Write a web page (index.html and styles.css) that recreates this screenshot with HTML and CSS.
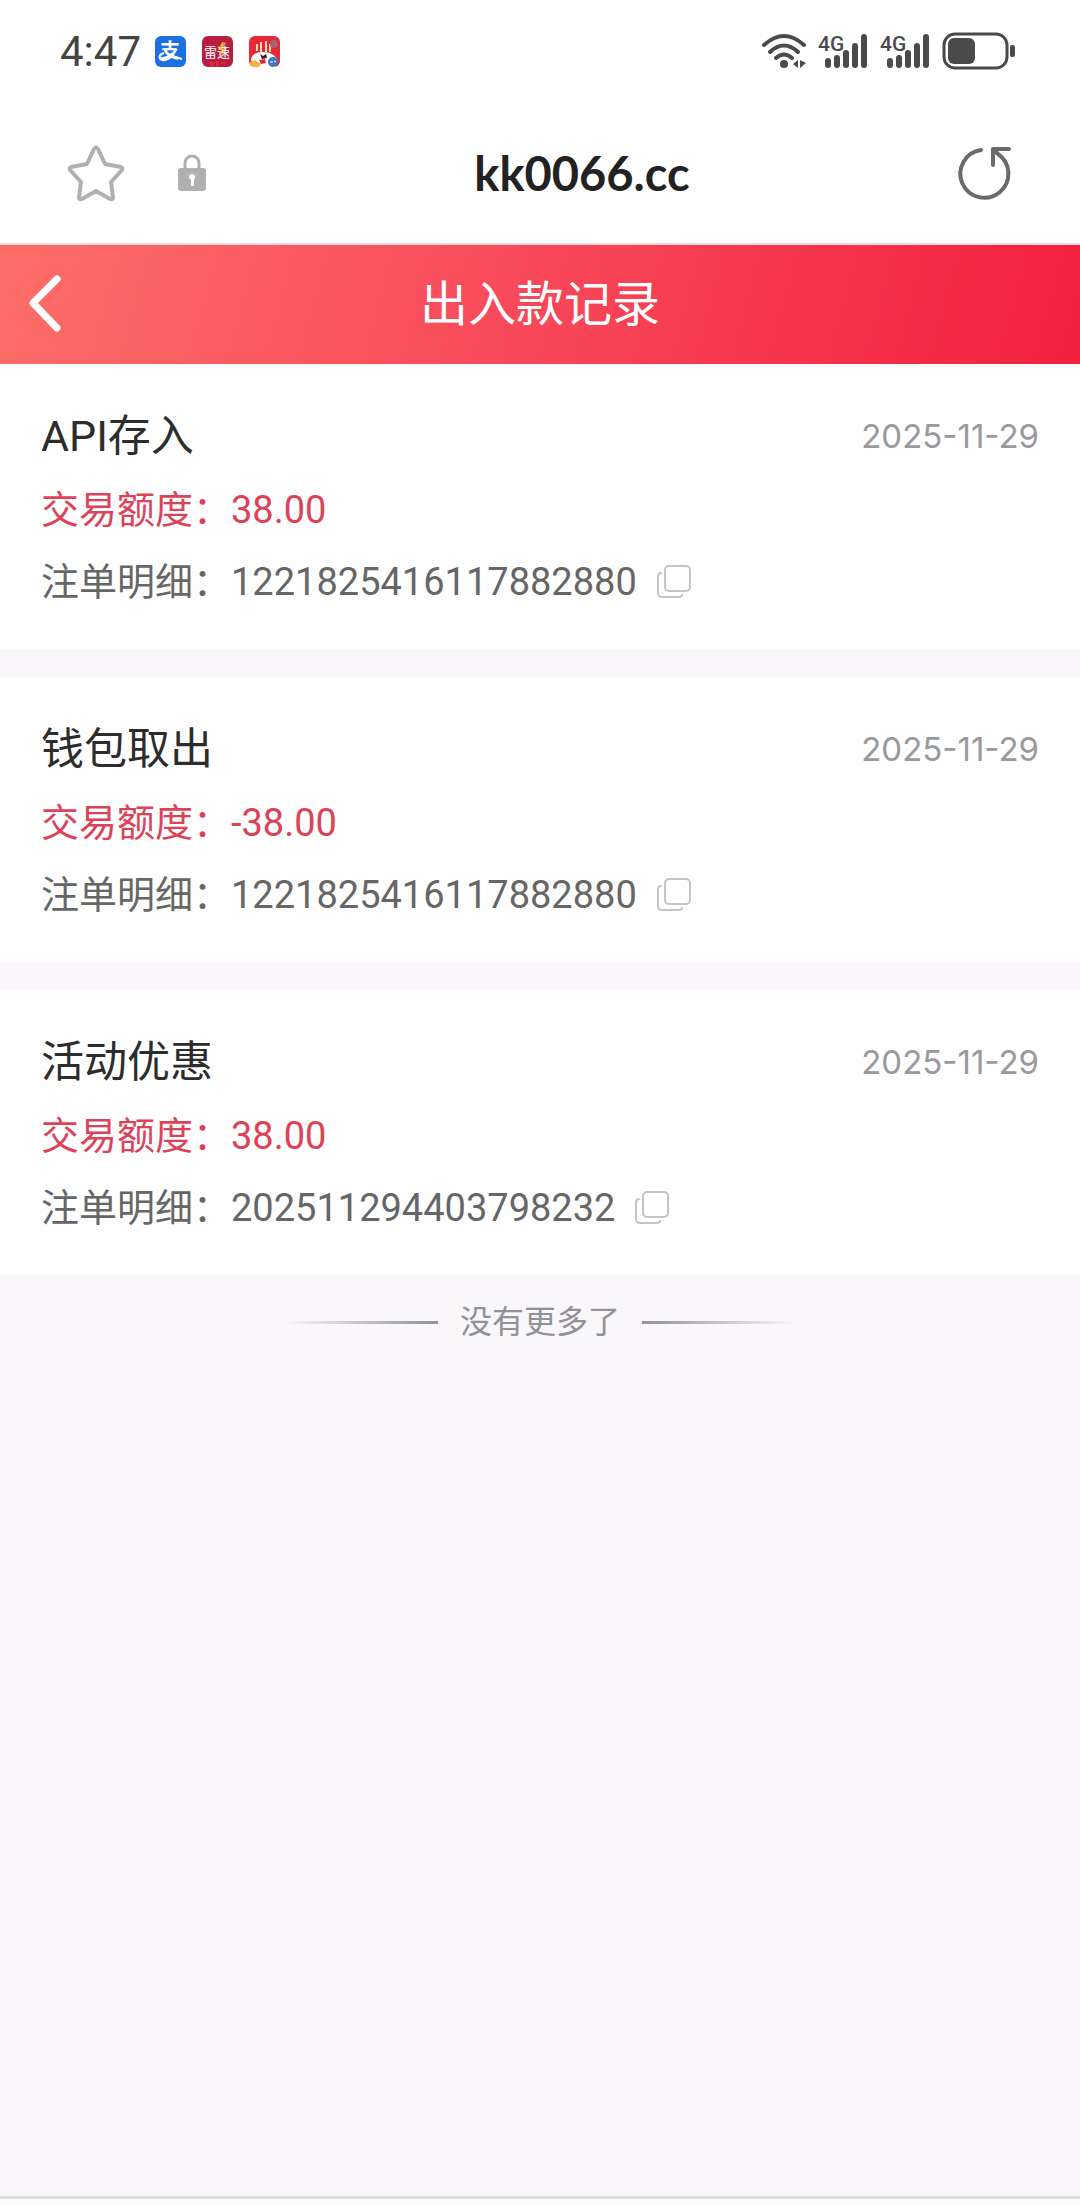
FILE: index.html
```html
<!DOCTYPE html>
<html lang="zh-CN">
<head>
<meta charset="utf-8">
<meta name="viewport" content="width=device-width, initial-scale=1">
<title>出入款记录</title>
<link rel="stylesheet" href="styles.css">
</head>
<body>

<!-- status bar -->
<div class="status">
	<span class="time">4:47</span>
	<div class="apps">
		<svg width="31" height="31" viewBox="0 0 31 31">
			<rect width="31" height="31" rx="6" fill="#1b70e4"/>
			<text x="15" y="22" class="app-zhi">支</text>
			<path d="M9 17c-7 2-5 8 1 7 5-1 8-4 9-7M15 18q6 4 12 5" fill="none" stroke="#fff" stroke-width="2"/>
		</svg>
		<svg width="31" height="31" viewBox="0 0 31 31">
			<rect width="31" height="31" rx="6" fill="#b81f3e"/>
			<path d="M20 6l-4 8h4l-3 8 8-10h-4l3-5z" fill="#f5a12c"/>
			<text x="15" y="21" class="app-lei">雷速</text>
			<path d="M8 26h4v5H8zM14 25h3v6h-3zM19 26h5v2h-5z" fill="#e0233f"/>
		</svg>
		<svg width="31" height="31" viewBox="0 0 31 31">
			<rect width="31" height="31" rx="6" fill="#e8283a"/>
			<path d="M8 8v7M12 6v10M17 5v11M21 8v8" stroke="#ffd9b0" stroke-width="2"/>
			<circle cx="25" cy="8" r="4" fill="#a8636c"/>
			<path d="M2 24c0-5 5-8 12-8s13 3 14 9l-2 6H5z" fill="#fff"/>
			<path d="M11 18l3 2 3-2 1 4-5 1z" fill="#2b2230"/>
			<path d="M10 24l6-1 1 4-5 1z" fill="#e8283a"/>
			<path d="M1 26l5-2 6 4-2 3H5q-4 0-4-5z" fill="#f3b440"/>
			<circle cx="24" cy="26" r="5" fill="#3b78c8"/>
			<path d="M21 26h3M25 25l2 1" stroke="#fff"/>
		</svg>
	</div>
	<div class="signals">
		<svg width="44" height="36" viewBox="0 0 44 36" fill="none" stroke="#4a4a4a" stroke-width="4" stroke-linecap="round">
			<path d="M2 12q20-18 40 0M8 19q14-13 28 0M14 25q8-7 16 0"/>
			<circle cx="22" cy="31" r="4" fill="#4a4a4a" stroke="none"/>
			<path d="M36 27v8l-5-4zM38 27v8l6-5z" fill="#4a4a4a" stroke="none"/>
		</svg>
		<svg width="50" height="36" viewBox="0 0 50 36">
			<text x="0" y="18" class="net">4G</text>
			<path d="M10 28v4M19 25v7M28 20v12M37 13v19M46 4v28" stroke="#4a4a4a" stroke-width="6" stroke-linecap="round"/>
		</svg>
		<svg width="50" height="36" viewBox="0 0 50 36">
			<text x="0" y="18" class="net">4G</text>
			<path d="M10 28v4M19 25v7M28 20v12M37 13v19M46 4v28" stroke="#4a4a4a" stroke-width="6" stroke-linecap="round"/>
		</svg>
		<svg width="73" height="38" viewBox="0 0 73 38">
			<rect x="2" y="2" width="63" height="34" rx="11" fill="none" stroke="#4a4a4a" stroke-width="3"/>
			<rect x="6" y="6" width="27" height="26" rx="6" fill="#4a4a4a"/>
			<rect x="68" y="13" width="5" height="12" rx="2" fill="#4a4a4a"/>
		</svg>
	</div>
</div>

<!-- browser bar -->
<div class="browser">
	<button class="icon-btn" type="button" aria-label="收藏">
		<svg width="56" height="56" viewBox="0 0 56 56" fill="none" stroke="#b0b0b0" stroke-width="4" stroke-linejoin="round">
			<path d="M26 4q2-3 4 0l7 15 16 3q2 1 1 3L43 37l2 16q-1 2-3 1L28 46 14 54q-2 1-3-1l2-16L2 25q-1-2 1-3l16-3z"/>
		</svg>
	</button>
	<svg class="lock" width="28" height="37" viewBox="0 0 28 37">
		<path d="M7 16V9a7 7 0 0 1 14 0v7" fill="none" stroke="#b0b0b0" stroke-width="3"/>
		<rect y="14" width="28" height="23" rx="3" fill="#b0b0b0"/>
		<circle cx="14" cy="23" r="3" fill="#fff"/>
		<path d="M13 24h3v8h-3z" fill="#fff"/>
	</svg>
	<span class="site">kk0066.cc</span>
	<button class="icon-btn" type="button" aria-label="刷新">
		<svg width="56" height="56" viewBox="0 0 56 56" fill="none" stroke="#6a6a6a" stroke-width="4" stroke-linecap="round" stroke-linejoin="round">
			<path d="M23 5A24 24 0 1 0 40 9M51 4H35V20M35 4l5 5"/>
		</svg>
	</button>
</div>

<header class="header">
	<a class="back" href="#" aria-label="返回">
		<svg width="34" height="58" viewBox="0 0 34 58" fill="none" stroke="#fff" stroke-width="7" stroke-linecap="round" stroke-linejoin="round">
			<path d="M29 3L5 27l24 25"/>
		</svg>
	</a>
	<h1>出入款记录</h1>
</header>

<main class="records">
	<section class="record">
		<div class="top">
			<h2>API存入</h2>
			<time>2025-11-29</time>
		</div>
		<p class="amount">交易额度：<span>38.00</span></p>
		<p class="detail">注单明细：<span>1221825416117882880</span><button class="icon-btn copy" type="button" aria-label="复制">
				<svg width="34" height="34" viewBox="0 0 34 34"><use href="#copy"/></svg>
			</button>
		</p>
	</section>
	<section class="record">
		<div class="top">
			<h2>钱包取出</h2>
			<time>2025-11-29</time>
		</div>
		<p class="amount">交易额度：<span>-38.00</span></p>
		<p class="detail">注单明细：<span>1221825416117882880</span><button class="icon-btn copy" type="button" aria-label="复制">
				<svg width="34" height="34" viewBox="0 0 34 34"><use href="#copy"/></svg>
			</button>
		</p>
	</section>
	<section class="record">
		<div class="top">
			<h2>活动优惠</h2>
			<time>2025-11-29</time>
		</div>
		<p class="amount">交易额度：<span>38.00</span></p>
		<p class="detail">注单明细：<span>202511294403798232</span><button class="icon-btn copy" type="button" aria-label="复制">
				<svg width="34" height="34" viewBox="0 0 34 34"><use href="#copy"/></svg>
			</button>
		</p>
	</section>
</main>

<div class="nomore">没有更多了</div>

<div class="bottom"></div>

<svg class="defs" width="0" height="0">
	<symbol id="copy" viewBox="0 0 34 34">
		<g fill="none" stroke="#c4c4c4" stroke-width="2" stroke-linecap="round">
			<rect x="8" y="1" width="25" height="25" rx="4"/>
			<path d="M4 8q-3 0-3 4v16q0 4 4 4h16q4 0 4-2"/>
		</g>
	</symbol>
</svg>

</body>
</html>
```

FILE: styles.css
```css
* {
	box-sizing: border-box;
}
body {
	margin: 0;
	min-height: 100vh;
	display: flex;
	flex-direction: column;
	background: #f9f7fa;
	font-family: Roboto, "Noto Sans CJK SC", sans-serif;
}
h1, h2, p {
	margin: 0;
	font-weight: 400;
}
svg {
	display: block;
	overflow: visible;
}
.icon-btn {
	padding: 0;
	border: 0;
	background: none;
	cursor: pointer;
}

/* status bar */
.status {
	display: flex;
	align-items: center;
	height: 102px;
	padding: 0 65px 0 60px;
	background: #fff;
}
.time {
	font-size: 42px;
	color: #444;
}
.apps {
	display: flex;
	gap: 16px;
	margin-left: 14px;
}
.app-zhi,
.app-lei {
	font-family: "Noto Sans CJK SC", sans-serif;
	fill: #fff;
	text-anchor: middle;
}
.app-zhi {
	font-size: 20px;
	font-weight: 700;
}
.app-lei {
	font-size: 13px;
}
.signals {
	display: flex;
	align-items: center;
	gap: 12px;
	margin-left: auto;
}
.net {
	font-size: 21px;
	font-weight: 500;
	fill: #4a4a4a;
}

/* browser bar */
.browser {
	display: flex;
	align-items: center;
	height: 143px;
	padding: 0 66px 0 68px;
	background: #fff;
	border-bottom: 2px solid #e4dcde;
}
.lock {
	margin-left: 54px;
}
.site {
	flex: 1;
	text-align: center;
	font-family: Lato, sans-serif;
	font-size: 47px;
	font-weight: 700;
	color: #222;
}

/* page header */
.header {
	display: grid;
	grid-template-columns: 1fr auto 1fr;
	align-items: center;
	height: 119px;
	padding: 0 28px;
	background: linear-gradient(105deg, #fd6e68, #f8495a 48%, #f3203f);
	color: #fff;
}
.header h1 {
	font-size: 48px;
	line-height: 72px;
}

/* records */
.records {
	display: flex;
	flex-direction: column;
	gap: 28px;
}
.record {
	padding: 34px 41px 31px;
	background: #fefefe;
}
.top {
	display: flex;
	align-items: center;
	justify-content: space-between;
	line-height: 76px;
}
.top h2 {
	font-size: 43px;
	color: #2c2c2c;
}
.top time {
	font-family: Inter, sans-serif;
	font-size: 33px;
	color: #9a999c;
}
.amount,
.detail {
	height: 72px;
	font-size: 38px;
	line-height: 72px;
}
.amount {
	color: #dc4358;
}
.detail {
	color: #666;
}
.copy {
	margin-left: 20px;
	line-height: 1;
	vertical-align: -4px;
}

.nomore {
	display: flex;
	align-items: center;
	justify-content: center;
	gap: 22px;
	padding: 22px 0;
	font-size: 32px;
	line-height: 50px;
	color: #929195;
}
.nomore::before,
.nomore::after {
	content: "";
	width: 154px;
	height: 3px;
	background: linear-gradient(to left, #929195, #f9f7fa);
}
.nomore::after {
	background: linear-gradient(to right, #929195, #f9f7fa);
}

.bottom {
	height: 9px;
	margin-top: auto;
	background: #fdfcfd;
	border-top: 3px solid #dfdde0;
}
.defs {
	position: absolute;
}
```
